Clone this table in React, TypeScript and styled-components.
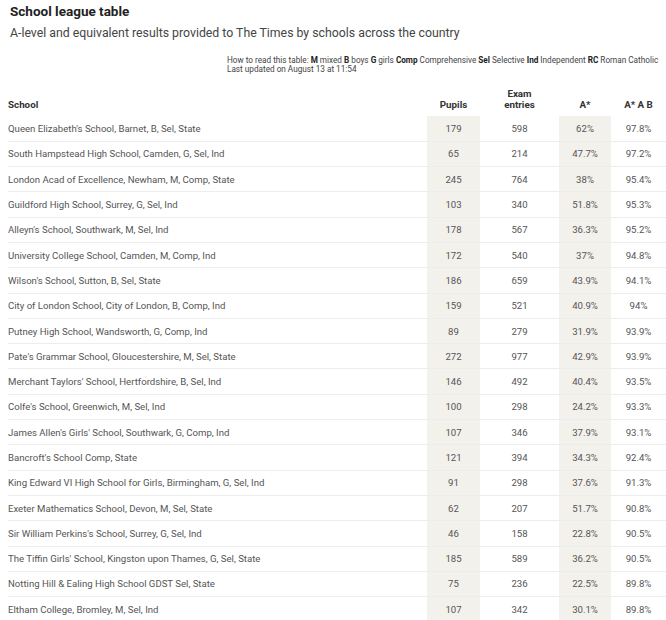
import styled, { createGlobalStyle } from "styled-components";

const GlobalStyle = createGlobalStyle`
  html, body {
    margin: 0;
    padding: 0;
    background: #fff;
  }
  body {
    font-family: Roboto, "Liberation Sans", sans-serif;
    overflow: hidden;
  }
`;

const Page = styled.div`
  width: 666px;
  padding: 2px 0 0 8px;
  box-sizing: border-box;
`;

const Title = styled.h1`
  margin: 0 0 0 2px;
  font-size: 13.5px;
  font-weight: 700;
  color: #222;
  line-height: 18px;
`;

const Subtitle = styled.p`
  margin: 5px 0 0 2px;
  font-size: 12.3px;
  line-height: 16px;
  color: #444;
`;

const Legend = styled.div`
  margin: 15px 0 0 219px;
  font-size: 8.2px;
  line-height: 9px;
  color: #444;
  white-space: nowrap;

  b {
    color: #222;
  }
`;

const Table = styled.table`
  width: 658px;
  margin-top: 14px;
  border-collapse: collapse;
  table-layout: fixed;
`;

const Th = styled.th<{ $align?: string; $w?: number }>`
  width: ${(p) => (p.$w ? `${p.$w}px` : "auto")};
  text-align: ${(p) => p.$align || "center"};
  vertical-align: bottom;
  font-size: 9.8px;
  line-height: 11px;
  font-weight: 700;
  color: #333;
  padding: 0 0 6px;
`;

const Row = styled.tr`
  height: 25.3px;
  border-top: 1px solid #ededed;

  &:first-child {
    border-top: none;
  }
`;

const Td = styled.td<{ $shade?: boolean; $align?: string }>`
  text-align: ${(p) => p.$align || "center"};
  font-size: 9.6px;
  color: #555;
  padding: 0;
  background: ${(p) => (p.$shade ? "#f3f1ec" : "transparent")};
  white-space: nowrap;
`;

const rows: [string, number, number, string, string][] = [
  ["Queen Elizabeth's School, Barnet, B, Sel, State", 179, 598, "62%", "97.8%"],
  ["South Hampstead High School, Camden, G, Sel, Ind", 65, 214, "47.7%", "97.2%"],
  ["London Acad of Excellence, Newham, M, Comp, State", 245, 764, "38%", "95.4%"],
  ["Guildford High School, Surrey, G, Sel, Ind", 103, 340, "51.8%", "95.3%"],
  ["Alleyn's School, Southwark, M, Sel, Ind", 178, 567, "36.3%", "95.2%"],
  ["University College School, Camden, M, Comp, Ind", 172, 540, "37%", "94.8%"],
  ["Wilson's School, Sutton, B, Sel, State", 186, 659, "43.9%", "94.1%"],
  ["City of London School, City of London, B, Comp, Ind", 159, 521, "40.9%", "94%"],
  ["Putney High School, Wandsworth, G, Comp, Ind", 89, 279, "31.9%", "93.9%"],
  ["Pate's Grammar School, Gloucestershire, M, Sel, State", 272, 977, "42.9%", "93.9%"],
  ["Merchant Taylors' School, Hertfordshire, B, Sel, Ind", 146, 492, "40.4%", "93.5%"],
  ["Colfe's School, Greenwich, M, Sel, Ind", 100, 298, "24.2%", "93.3%"],
  ["James Allen's Girls' School, Southwark, G, Comp, Ind", 107, 346, "37.9%", "93.1%"],
  ["Bancroft's School Comp, State", 121, 394, "34.3%", "92.4%"],
  ["King Edward VI High School for Girls, Birmingham, G, Sel, Ind", 91, 298, "37.6%", "91.3%"],
  ["Exeter Mathematics School, Devon, M, Sel, State", 62, 207, "51.7%", "90.8%"],
  ["Sir William Perkins's School, Surrey, G, Sel, Ind", 46, 158, "22.8%", "90.5%"],
  ["The Tiffin Girls' School, Kingston upon Thames, G, Sel, State", 185, 589, "36.2%", "90.5%"],
  ["Notting Hill & Ealing High School GDST Sel, State", 75, 236, "22.5%", "89.8%"],
  ["Eltham College, Bromley, M, Sel, Ind", 107, 342, "30.1%", "89.8%"],
];

export default function App() {
  return (
    <Page>
      <GlobalStyle />
      <Title>School league table</Title>
      <Subtitle>
        A-level and equivalent results provided to The Times by schools across the country
      </Subtitle>
      <Legend>
        How to read this table: <b>M</b> mixed <b>B</b> boys <b>G</b> girls <b>Comp</b>{" "}
        Comprehensive <b>Sel</b> Selective <b>Ind</b> Independent <b>RC</b> Roman Catholic
        <br />
        Last updated on August 13 at 11:54
      </Legend>
      <Table>
        <thead>
          <tr>
            <Th $align="left">School</Th>
            <Th $w={53}>Pupils</Th>
            <Th $w={79}>
              Exam
              <br />
              entries
            </Th>
            <Th $w={52}>A*</Th>
            <Th $w={55}>A* A B</Th>
          </tr>
        </thead>
        <tbody>
          {rows.map(([name, pupils, entries, astar, aab]) => (
            <Row key={name}>
              <Td $align="left">{name}</Td>
              <Td $shade>{pupils}</Td>
              <Td>{entries}</Td>
              <Td $shade>{astar}</Td>
              <Td>{aab}</Td>
            </Row>
          ))}
        </tbody>
      </Table>
    </Page>
  );
}
